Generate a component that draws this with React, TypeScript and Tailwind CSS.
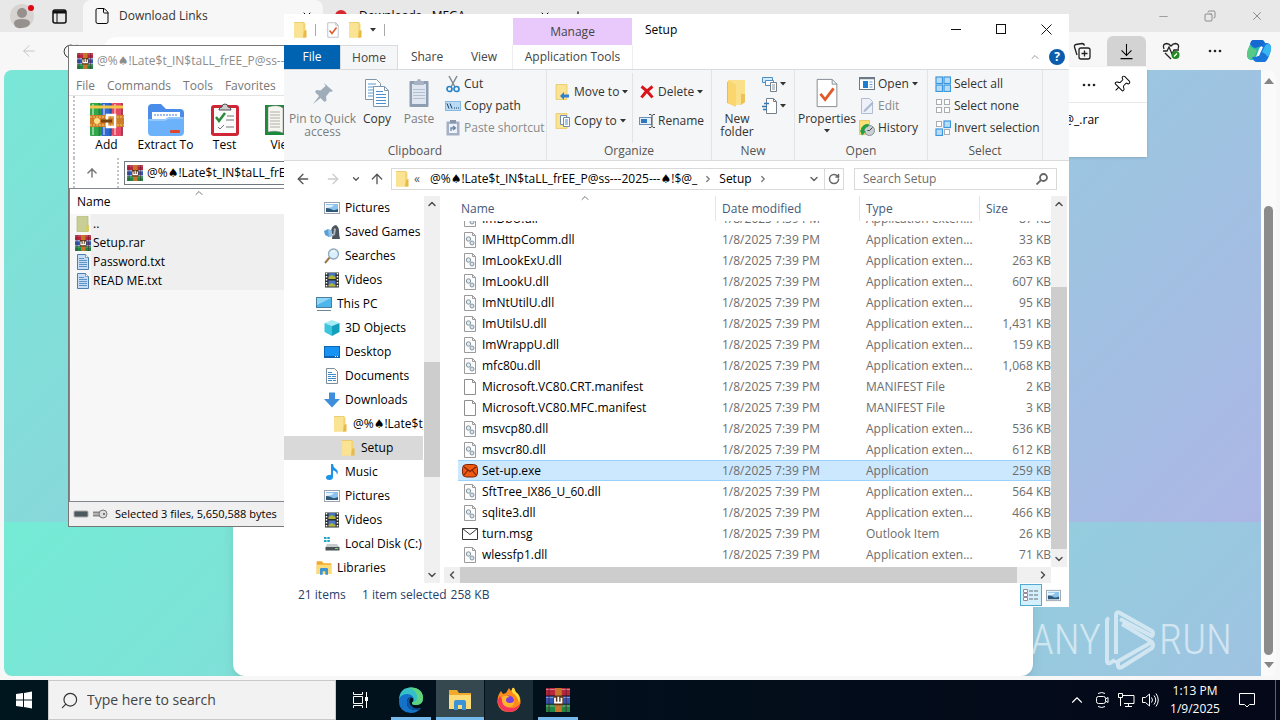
import { useLayoutEffect, useRef } from "react";
import type { ReactNode } from "react";
import clsx from "clsx";
import {
  ArrowDownToLine,
  ArrowLeft,
  ArrowRight,
  ArrowUp,
  ChevronDown,
  ChevronLeft,
  ChevronRight,
  ChevronUp,
  Copy,
  File,
  Lock,
  Minus,
  Pin,
  Plus,
  RotateCw,
  Search,
  X,
} from "lucide-react";

const ARCHIVE = "@%♠!Late$t_IN$taLL_frEE_P@ss---2025---♠!$@_";

type IconProps = { size?: number };

/* ---------- Icons ---------- */

const FolderIcon = ({ size = 16 }: IconProps) => (
  <svg width={size} height={size} viewBox="0 0 16 16">
    <path d="M2 0.5h10l1.5 1.2V15.5H2z" fill="#f9dc7d" />
    <path d="M2 0.5h10v15H2z" fill="#fbe394" />
    <path d="M12 9l2.5-1v7.5H11z" fill="#e8b93c" />
    <path d="M2 0.5h10v15" fill="none" stroke="#e6c35c" strokeWidth="0.7" />
  </svg>
);

const ParentFolderIcon = () => (
  <svg width="16" height="16" viewBox="0 0 16 16">
    <path d="M2 0.5h11v15H2z" fill="#c9cf94" stroke="#b3b876" strokeWidth="0.7" />
    <path d="M11 10l3-1v6.500h-3z" fill="#d6cd62" />
  </svg>
);

const BooksIcon = ({ size = 16 }: IconProps) => (
  <svg width={size} height={size} viewBox="0 0 16 16">
    <rect width="16" height="5" fill="#b8263b" />
    <rect y="5.5" width="16" height="5" fill="#2f58b4" />
    <rect y="11" width="16" height="5" fill="#1f8742" />
    <path d="M0 1h16M0 6.3h16M0 12h16" stroke="#fff" strokeOpacity="0.4" strokeWidth="0.7" />
    <path d="M2 0v16M13.5 0v16" stroke="#521730" strokeOpacity="0.5" />
    <rect x="6" width="4.5" height="16" fill="#c8752c" />
    <rect x="5" y="5" width="6.5" height="6.5" fill="#5b3318" />
    <path d="M6 6.5v3.2h4.3V6.5M8.2 5.8v3.6" fill="none" stroke="#fff" strokeWidth="1.2" />
  </svg>
);

const AddIcon = () => (
  <svg width="34" height="34" viewBox="0 0 34 34">
    <rect x="0" y="0" width="11" height="33" rx="1" fill="#31a848" />
    <rect x="11" y="0" width="11" height="33" rx="1" fill="#3268cf" />
    <rect x="22" y="0" width="11" height="33" rx="1" fill="#e54863" />
    <path d="M3 1v31M14 1v31M25 1v31" stroke="#fff" strokeOpacity="0.45" strokeWidth="2" />
    <path d="M9.500 0v33M20.500 0v33M32 0v33" stroke="#17233f" strokeOpacity="0.3" strokeWidth="2" />
    <path d="M0 4h11M11 4h11M22 4h11" stroke="#f1c64a" strokeWidth="3" />
    <rect x="-1" y="12" width="36" height="12" fill="#cf7d26" />
    <path d="M0 14h34M0 22h34" stroke="#f5cd75" strokeWidth="1" strokeDasharray="2 1" />
    <rect x="17" y="12" width="8" height="12" fill="none" stroke="#fff" strokeWidth="2.500" />
    <path d="M11 18h11" stroke="#7b4310" strokeWidth="3" />
    <circle cx="7" cy="18" r="3" fill="#ffe08a" />
  </svg>
);

const ExtractIcon = () => (
  <svg width="38" height="34" viewBox="0 0 38 34">
    <path d="M1 5q0-4 4-4h9l5 5h14q4 0 4 4v8H1z" fill="#4a8cea" />
    <path d="M5 9h28v10H5z" fill="#fff" />
    <path d="M7 12h24" stroke="#9fbde6" strokeWidth="2" strokeDasharray="2 1" />
    <path d="M1 16h17l4-2h15v15q0 4-4 4H5q-4 0-4-4z" fill="#6cb2fa" />
    <path d="M2 17h16l4-2h14" stroke="#b6dcff" fill="none" />
    <rect x="23" y="27" width="10" height="3" rx="1" fill="#e0452d" />
  </svg>
);

const TestIcon = () => (
  <svg width="30" height="34" viewBox="0 0 30 34">
    <rect x="1" y="2" width="28" height="31" rx="3" fill="#cf2536" />
    <rect x="4" y="5" width="22" height="25" fill="#fbfbfb" />
    <path d="M9 7q0-3 3-3 0-3 3-3t3 3q3 0 3 3z" fill="#ccc" stroke="#555" />
    <path d="M6 14l3 4 6-8" fill="none" stroke="#2a8a3c" strokeWidth="2.500" />
    <path d="M17 13h7M16 17h8M8 24l2 2 4-4M16 24h8" fill="none" stroke="#777" />
  </svg>
);

const ViewIcon = () => (
  <svg width="38" height="34" viewBox="0 0 38 34">
    <path d="M0 2h36v30H0z" fill="#1d8a3b" />
    <path d="M3 4q10-3 15 1v25q-6-3-15-1zM34 4q-10-3-15 1v25q6-3 15-1z" fill="#f6f6f1" stroke="#777" strokeWidth="0.500" />
    <path d="M5 9h10M5 12h10M5 15h10M5 18h10M5 21h10M5 24h10" stroke="#b0b0a8" />
  </svg>
);

const TextFileIcon = () => (
  <svg width="14" height="16" viewBox="0 0 14 16">
    <path d="M1.500 0.500h8l3 3v12h-11z" fill="#c5def5" stroke="#4c7fae" />
    <path d="M9.500 0.500v3h3" fill="#fff" stroke="#4c7fae" strokeWidth="0.700" />
    <path d="M3 4.500h5M3 6.500h8M3 8.500h8M3 10.500h8M3 12.500h8" stroke="#5f92c4" />
  </svg>
);

const DllIcon = () => (
  <svg width="14" height="16" viewBox="0 0 14 16">
    <path d="M1.500 0.500h8l3 3v12h-11z" fill="#fcfcfc" stroke="#9b9b9b" />
    <path d="M9.500 0.500v3h3" fill="none" stroke="#9b9b9b" />
    <circle cx="5.500" cy="7" r="2.200" fill="#e5eaed" stroke="#8195a2" />
    <circle cx="9" cy="11" r="2" fill="#dbe4ea" stroke="#8195a2" />
  </svg>
);

const BlankIcon = () => (
  <svg width="14" height="16" viewBox="0 0 14 16">
    <path d="M1.500 0.500h8l3 3v12h-11z" fill="#fff" stroke="#8e8e8e" />
    <path d="M9.500 0.500v3h3" fill="none" stroke="#8e8e8e" />
  </svg>
);

const MailExeIcon = () => (
  <svg width="16" height="14" viewBox="0 0 16 14">
    <rect x="0.500" y="0.500" width="15" height="12.500" rx="4" fill="#ee5a14" stroke="#7d2305" />
    <path d="M2 3l6 4.500L14 3M2 11l4-5M14 11l-4-5" fill="none" stroke="#7d2305" strokeWidth="1.200" />
  </svg>
);

const MsgIcon = () => (
  <svg width="16" height="12" viewBox="0 0 16 12">
    <path d="M0.500 0.500h15v11H0.500zl7.500 6 7.500-6" fill="#fff" stroke="#3a3a3a" />
  </svg>
);

const PictureIcon = ({ size = 16 }: IconProps) => (
  <svg width={size} height={size} viewBox="0 0 16 16">
    <rect x="0.500" y="2.500" width="15" height="11" fill="#fff" stroke="#9aa3ad" />
    <rect x="2" y="4" width="12" height="8" fill="#8cc3ec" />
    <path d="M2 5h8q-2 3-8 3z" fill="#e2f1fb" />
    <path d="M2 8q4 0 6 1.500T14 9v3H2z" fill="#2f5878" />
  </svg>
);

const GamesIcon = () => (
  <svg width="16" height="16" viewBox="0 0 16 16">
    <path d="M8 15q0-3 1-5-2 0-2-2 0-6 5-7 3 2 3 6 0 4 1 8z" fill="#4c555e" />
    <path d="M0 7l4-2 4 2v5l-3 1-4-2z" fill="#5a9fd4" />
    <path d="M4 5l4 2v5l-3 1z" fill="#8fc3e8" />
    <path d="M10 4l2 1-1 6-2 1z" fill="#a9b6c1" />
  </svg>
);

const MagnifierIcon = () => (
  <svg width="16" height="16" viewBox="0 0 16 16">
    <path d="M1 15l5-6" stroke="#a0784e" strokeWidth="2" />
    <circle cx="9.500" cy="6" r="5" fill="#d8effc" stroke="#8fa9bc" strokeWidth="1.300" />
    <path d="M7 5q1-2.500 4-2" stroke="#fff" fill="none" />
  </svg>
);

const FilmIcon = () => (
  <svg width="16" height="16" viewBox="0 0 16 16">
    <rect x="1" y="0.500" width="14" height="15" fill="#2e2e2e" />
    <path d="M2.500 1v15M13.500 1v15" stroke="#fff" strokeWidth="1.500" strokeDasharray="1.500 1.500" />
    <path d="M4.500 1h7v6h-7z" fill="#4676b9" />
    <path d="M4.500 8.500h7v6h-7z" fill="#4f78c2" />
    <path d="M4.500 5l3-2 4 2v2h-7zM4.500 13l3-2 4 2v1.500h-7z" fill="#b2b438" />
  </svg>
);

const PcIcon = () => (
  <svg width="16" height="16" viewBox="0 0 16 16">
    <rect x="0.500" y="1.500" width="15" height="10" fill="#4fb6ec" stroke="#4a7f9f" />
    <path d="M1 2h14L1 9z" fill="#8fd6f7" />
    <path d="M1 14.500h14" stroke="#6f8796" />
  </svg>
);

const CubeIcon = () => (
  <svg width="16" height="16" viewBox="0 0 16 16">
    <path d="M8 0l7.500 3L8 6 0.500 3z" fill="#a5ecf6" />
    <path d="M0.500 3L8 6v10l-7.500-4z" fill="#3cc6de" />
    <path d="M15.500 3L8 6v10l7.500-4z" fill="#13a0be" />
  </svg>
);

const DesktopIcon = () => (
  <svg width="16" height="16" viewBox="0 0 16 16">
    <rect x="0.500" y="2.500" width="15" height="11" fill="#1793f4" stroke="#0b66b5" />
    <path d="M1 12.500h14" stroke="#0e5fa8" />
    <path d="M11 12.500h3" stroke="#fff" strokeDasharray="1 1" />
  </svg>
);

const DocumentIcon = () => (
  <svg width="16" height="16" viewBox="0 0 16 16">
    <path d="M2.500 0.500h8l3 3v12h-11z" fill="#fff" stroke="#7e8c98" />
    <path d="M4 4.500h4M4 6.500h8M4 8.500h3M8 8.500h4M4 10.500h8M4 12.500h4M9 12.500h3" stroke="#3e8cc7" />
  </svg>
);

const DownIcon = () => (
  <svg width="16" height="16" viewBox="0 0 16 16">
    <path d="M5 0.500h6V7h5l-8 8.500L0 7h5z" fill="#3d8fdb" />
  </svg>
);

const MusicIcon = () => (
  <svg width="16" height="16" viewBox="0 0 16 16">
    <path d="M7 0h2q0 3 3 5t1 6q0-4-4-4.500V13q0 3-3.500 3T2 13.500 5 11l2-.2z" fill="#1d94e8" />
  </svg>
);

const DiskIcon = () => (
  <svg width="16" height="16" viewBox="0 0 16 16">
    <path d="M0 1h2.500v2H0zM3.300 1h2.500v2H3.300zM0 4h2.500v2H0zM3.300 4h2.500v2H3.300z" fill="#1fa5c8" />
    <path d="M3 8h10l2.500 3h-14z" fill="#c7cccf" />
    <rect x="1.500" y="11" width="14" height="3.500" fill="#4b5257" />
    <rect x="11" y="12" width="3" height="1" fill="#6fe06f" />
  </svg>
);

const LibraryIcon = ({ size = 16 }: IconProps) => (
  <svg width={size} height={size} viewBox="0 0 24 24">
    <path d="M1 2h8l2 3h12v16H1z" fill="#f0a92b" />
    <path d="M1 7h22v14H1z" fill="#fbdc79" />
    <path d="M6 22v-8q0-2 2-2h8q2 0 2 2v8h-4v-5h-4v5z" fill="#3c93d6" />
  </svg>
);

const CheckPage = ({ size = 16 }: IconProps) => (
  <svg width={size} height={size} viewBox="0 0 24 32">
    <path d="M1.500 1.500h16l5 5v24h-21z" fill="#fff" stroke="#808890" />
    <path d="M17.500 1.500v5h5" fill="none" stroke="#808890" />
    <path d="M5 17l5 6 9-12" fill="none" stroke="#e1582a" strokeWidth="3" />
  </svg>
);

const PinQuickIcon = () => (
  <svg width="24" height="24" viewBox="0 0 24 24">
    <path d="M13 2l9 8-2 1-1-.5-4 5 .5 4-2 1.500-4-4L2 23l6-8-4-4 1.500-2 4 .5 5-4.500z" fill="#9fadbb" />
  </svg>
);

const CopyIcon = () => (
  <svg width="26" height="30" viewBox="0 0 26 30">
    <path d="M1.500 1.500h11l4 4v16h-15z" fill="#fff" stroke="#8096aa" />
    <path d="M4 6h8M4 9h10M4 12h10M4 15h10M4 18h10" stroke="#5b9bd5" />
    <path d="M9.500 8.500h11l4 4v16h-15z" fill="#fff" stroke="#8096aa" />
    <path d="M20.500 8.500v4h4" fill="none" stroke="#8096aa" />
    <path d="M12 13.500h7M12 16.500h10M12 19.500h10M12 22.500h10M12 25.500h10" stroke="#4b8fd0" />
  </svg>
);

const PasteIcon = () => (
  <svg width="22" height="30" viewBox="0 0 22 30">
    <rect x="1.500" y="3" width="19" height="26" rx="1" fill="#8e9db1" />
    <rect x="4" y="6" width="14" height="20" fill="#dfe6f0" />
    <path d="M6 3h3q0-2 2-2t2 2h3v4H6z" fill="#a7b3c3" />
    <path d="M5 11.500h12M5 14.500h12M5 17.500h12M5 20.500h12" stroke="#b3c0d2" />
  </svg>
);

const CutIcon = () => (
  <svg width="14" height="18" viewBox="0 0 14 18">
    <path d="M3 1l6 11M11 1L5 12" stroke="#7e8a94" strokeWidth="1.500" />
    <circle cx="3.500" cy="14" r="2.500" fill="none" stroke="#2a86c8" strokeWidth="1.700" />
    <circle cx="10.500" cy="14" r="2.500" fill="none" stroke="#2a86c8" strokeWidth="1.700" />
  </svg>
);

const CopyPathIcon = () => (
  <svg width="16" height="12" viewBox="0 0 16 12">
    <rect x="0.500" y="1.500" width="15" height="9" fill="#b9dbf5" stroke="#8ab9de" />
    <path d="M2 3.500l2 5M5 3.500l2 5M9 8h1M11 8h1M13 8h1" stroke="#173f66" />
  </svg>
);

const ShortcutIcon = () => (
  <svg width="14" height="16" viewBox="0 0 14 16">
    <rect x="0.500" y="1.500" width="13" height="14" fill="#a3b0c6" />
    <rect x="3" y="4" width="8" height="9" fill="#eef2f8" />
    <rect x="4" width="6" height="3" fill="#8797ad" />
    <path d="M5 11V8h4M7 6l2.500 2L7 10" fill="none" stroke="#6b83a8" strokeWidth="1.300" />
  </svg>
);

const MoveIcon = () => (
  <svg width="16" height="16" viewBox="0 0 16 16">
    <path d="M1 0.500h11v15H1z" fill="#fbe394" stroke="#e6c35c" strokeWidth="0.700" />
    <path d="M5 12l4-4v2.500h5v3H9V16z" fill="#3181cf" />
  </svg>
);

const CopyToIcon = () => (
  <svg width="16" height="16" viewBox="0 0 16 16">
    <path d="M1 0.500h11v15H1z" fill="#fbe394" stroke="#e6c35c" strokeWidth="0.700" />
    <path d="M5.500 2.500h6v9h-6z" fill="#fff" stroke="#6f8cb0" />
    <path d="M8.500 4.500h6v9h-6z" fill="#fff" stroke="#6f8cb0" />
    <path d="M10 7h3M10 9h3M10 11h3" stroke="#4b8fd0" />
  </svg>
);

const DeleteIcon = () => (
  <svg width="14" height="14" viewBox="0 0 14 14">
    <path d="M1.500 1.500q6 4 11 11M12.500 1.500q-7 5-11 11" fill="none" stroke="#d8151c" strokeWidth="3" />
  </svg>
);

const RenameIcon = () => (
  <svg width="16" height="16" viewBox="0 0 16 16">
    <rect x="0.500" y="4.500" width="12" height="7" fill="#e3eefa" stroke="#6f90b5" />
    <rect x="2" y="6" width="6" height="4" fill="#2f78bd" />
    <path d="M10 1.500h2l1 1 1-1h2M13 2v12M10 14.500h2l1-1 1 1h2" fill="none" stroke="#4a4f55" />
  </svg>
);

const NewFolderIcon = () => (
  <svg width="22" height="28" viewBox="0 0 22 28">
    <path d="M1 3l8-2v26l-8-3z" fill="#e9bd4e" />
    <path d="M2 1h17v22l-4 3H9V6z" fill="#fbe08a" />
    <path d="M15 15h4v8l-4 3z" fill="#eec25a" />
    <path d="M2 1l8 5v22l-8-4z" fill="#fbd56d" />
  </svg>
);

const NewItemIcon = () => (
  <svg width="16" height="16" viewBox="0 0 16 16">
    <path d="M0.500 1.500h10v5h-10z" fill="#d7eafa" stroke="#4a8ec6" />
    <path d="M3.500 4.500h8v5h-8z" fill="#fff" stroke="#4a8ec6" />
    <path d="M8.500 6.500h6v9h-6z" fill="#fff" stroke="#75808a" />
    <path d="M10 9h3M10 11h3M10 13h3" stroke="#8a949d" />
  </svg>
);

const EasyAccessIcon = () => (
  <svg width="16" height="16" viewBox="0 0 16 16">
    <path d="M4.500 0.500h7l3 3v12h-10z" fill="#fff" stroke="#75808a" />
    <path d="M11.500 0.500v3h3" fill="none" stroke="#75808a" />
    <path d="M0 8.500h5M2 5.500h5M1 11.500h4" stroke="#2f78bd" strokeWidth="1.300" />
  </svg>
);

const OpenIcon = () => (
  <svg width="16" height="14" viewBox="0 0 16 14">
    <rect x="0.500" y="0.500" width="15" height="12" fill="#fff" stroke="#6d7a86" />
    <path d="M1 1.500h14" stroke="#6d7a86" strokeWidth="1.500" />
    <rect x="4" y="4" width="5" height="7" fill="#1f7fcf" />
    <path d="M10.500 5h3M10.500 7.500h3M10.500 10h3" stroke="#6d9dc8" />
  </svg>
);

const EditIcon = () => (
  <svg width="14" height="16" viewBox="0 0 14 16">
    <path d="M1.500 0.500h8l3 3v12h-11z" fill="#eef1f8" stroke="#b0bcd2" />
    <path d="M4 12l8-8 1.500 1.500-8 8-2 .5z" fill="#a9b8d3" />
  </svg>
);

const HistoryIcon = () => (
  <svg width="16" height="16" viewBox="0 0 16 16">
    <path d="M0.500 0.500h10v14h-10z" fill="#fbe178" stroke="#dfba45" strokeWidth="0.700" />
    <circle cx="10.500" cy="10.500" r="5" fill="#c9d0d4" stroke="#87919a" />
    <path d="M10.500 10.500l3-3M10.500 10.500h-2" stroke="#444" />
    <path d="M2 10a7 6 0 0 1 8-6l-1 3q-3 0-4 4l2 .5-4 4-2-5z" fill="#22a046" />
  </svg>
);

const Tiles = ({ on }: { on: boolean[] }) => (
  <svg width="16" height="16" viewBox="0 0 16 16">
    {on.map((lit, i) => {
      const x = i % 2 ? 8 : 0;
      const y = i > 1 ? 8 : 0;
      return lit ? (
        <rect key={i} x={x + 1} y={y + 1} width="6.500" height="6.500" fill="#b5ddfa" stroke="#3c97dc" strokeWidth="1.200" />
      ) : (
        <rect key={i} x={x + 1.5} y={y + 1.5} width="5" height="5" fill="#fff" stroke="#a7adb2" />
      );
    })}
  </svg>
);

const EdgeIcon = () => (
  <svg width="26" height="26" viewBox="0 0 26 26">
    <path d="M1 14Q1 6 8 6q8 0 8 6.500-1-2-3-2-4 0-4 5 0 7 8 7.500 4 0 6-2-4 5-10 5Q1 25 1 14z" fill="#1473c8" />
    <path d="M1 12Q2 .5 13 .5 24.500 1 25 11q0 7-7 7-4.500 0-4-2.500 2-1.500 1.500-4Q15 7.500 9.500 7 3.500 7 1 12z" fill="#35bfc9" />
    <path d="M13 .5Q24.500 1 25 11q0 7-7 7-4.500 0-4-2.500 6 0 5-7T9 1.200Q11 .5 13 .5z" fill="#5fd47a" />
    <path d="M9 15.500q0-4 4-5-3 4 0 8t9 2.500l1 0q-2 2-6 2-8-.5-8-7.500z" fill="#0e55a5" />
  </svg>
);

const FirefoxIcon = () => (
  <svg width="26" height="26" viewBox="0 0 26 26">
    <path d="M3 7l2-3 2 3 3-1 3-5 2 3q2-4 3-3 1 4 4 6 3 4 2.500 9-2 9-11.500 9T1.500 16Q1 11 3 7z" fill="#ff8a1c" />
    <path d="M1.500 14Q3 24 13 25q9 0 11.500-9-3 5-9 5-8 0-9-8L4 9z" fill="#f4365c" />
    <circle cx="12.500" cy="14" r="5.500" fill="#7a3ee0" />
    <path d="M6 10q4-3 8 0-4 0-4 3t4 3 4-3q1 7-6 7-7-1-6-10z" fill="#ffb52b" />
    <path d="M16 2q1-2 2-1 1 4 4 6 3 4 1 9-1-6-5-9-3-2-2-5z" fill="#ffde3c" />
  </svg>
);

const CopilotIcon = () => (
  <svg width="26" height="24" viewBox="0 0 26 24">
    <path d="M7 1h9q2 0 3 3l1 3h-4q-2 0-3 3l-3 8q-1 3-4 3-5 0-5-5 0-3 2-8t4-7z" fill="#28b9b0" />
    <path d="M7 1h9q2 0 3 3l1 3h-4L9 9Q6 8 4 5q1-4 3-4z" fill="#1769d2" />
    <path d="M1 15q0-4 3-9 2 4 7 5l-3 7q-1 2-4 2-3 0-3-5z" fill="#59c986" />
    <path d="M19 23h-9q-2 0-3-3l-1-2h4q2 0 3-3l3-8q1-3 4-3 5 0 5 5 0 3-2 8t-4 6z" fill="#1b76dc" />
    <path d="M25 9q0 4-3 9-3-4-6-5l3-6q1-2 3-2 3 0 3 4z" fill="#37b8f2" />
    <path d="M15 8l2 0-4 9h-2z" fill="#fff" />
  </svg>
);

const Caret = () => (
  <svg width="6" height="4" viewBox="0 0 6 4" className="shrink-0">
    <path d="M0 0h6L3 3.500z" fill="#333" />
  </svg>
);

const Dots = () => (
  <svg width="14" height="4" viewBox="0 0 14 4">
    <circle cx="2" cy="2" r="1.300" fill="#222" />
    <circle cx="7" cy="2" r="1.300" fill="#222" />
    <circle cx="12" cy="2" r="1.300" fill="#222" />
  </svg>
);

/* ---------- Browser ---------- */

const Browser = () => (
  <section className="flex flex-1 flex-col bg-[#f7f7f7]">
    <div className="flex h-8 shrink-0 bg-[#e8e8e8]">
      <div className="flex w-[83px] items-center gap-4 pl-2">
        <button aria-label="Profile" className="w-7">
          <svg width="28" height="28" viewBox="0 0 28 28">
            <circle cx="14" cy="14" r="12" fill="#d6d3d0" />
            <circle cx="14" cy="11" r="5" fill="#96918d" />
            <path d="M6 21q0-4 8-4t8 4-8 5-8-5z" fill="#96918d" />
            <circle cx="23" cy="6" r="3" fill="#dc0a15" />
          </svg>
        </button>
        <button aria-label="Tab actions">
          <svg width="15" height="15" viewBox="0 0 15 15">
            <rect x="1" y="1" width="13" height="13" rx="2" fill="none" stroke="#111" strokeWidth="1.500" />
            <path d="M1 3h13" stroke="#111" strokeWidth="3" />
            <path d="M5 3v11" stroke="#111" />
          </svg>
        </button>
      </div>
      <div className="flex w-60 items-center gap-2 rounded-t-lg bg-[#f7f7f7] px-[10px]">
        <File size={18} strokeWidth={1.3} />
        <span className="flex-1 text-[#333]">Download Links</span>
        <X size={12} />
      </div>
      <div className="flex w-60 items-center gap-3 px-3">
        <span className="size-3 rounded-full bg-[#d9272e]" />
        <span className="flex-1">Downloads - MEGA</span>
        <X size={12} />
      </div>
      <button aria-label="New tab" className="px-2">
        <Plus size={14} />
      </button>
      <div className="ml-auto flex items-center gap-[34px] pr-4 text-[#777]">
        <Minus size={13} strokeWidth={1.2} />
        <Copy size={12} strokeWidth={1.6} className="-scale-x-100" />
        <X size={14} strokeWidth={1.4} />
      </div>
    </div>

    <div className="relative flex h-[38px] shrink-0 items-center pl-5">
      <ArrowLeft size={18} strokeWidth={1} className="text-[#b5b5b5]" />
      <RotateCw size={17} strokeWidth={1.4} className="ml-6 text-[#333]" />
      <div className="ml-6 flex h-7 flex-1 items-center rounded-full bg-white pl-4">
        <Lock size={13} strokeWidth={1.5} />
      </div>
      <div className="flex items-center gap-3 pr-2 pl-10">
        <button aria-label="Collections" className="mr-1">
          <svg width="18" height="18" viewBox="0 0 18 18" fill="none" stroke="#222" strokeWidth="1.300">
            <rect x="6" y="6" width="11" height="11" rx="2" />
            <path d="M11.500 8.500v6M8.500 11.500h6M4 13l-2.500-8Q1 3 3 2.500L9 1.500q2 0 2.500 2" />
          </svg>
        </button>
        <button aria-label="Downloads" className="flex h-[30px] w-[39px] items-center justify-center rounded-t-md bg-[#d3d3d3]">
          <ArrowDownToLine size={19} strokeWidth={1.3} />
        </button>
        <button aria-label="Browser essentials" className="mr-2 ml-1">
          <svg width="18" height="18" viewBox="0 0 18 18" fill="none" stroke="#222" strokeWidth="1.300">
            <path d="M2 7Q0 2 4.500 1.500 7 1.500 9 4q2-2.500 4.500-2.500Q18 2 16 7M3 11l6 6M1 9h4l2-4 3 7 2-4h5" />
            <circle cx="13.500" cy="13" r="4" fill="#218a21" stroke="none" />
            <path d="M12 14.500l3-3" stroke="#fff" />
          </svg>
        </button>
        <button aria-label="Settings" className="mr-3 ml-2">
          <Dots />
        </button>
        <button aria-label="Copilot">
          <CopilotIcon />
        </button>
      </div>
      <div className="absolute top-[35px] right-[133px] w-[340px] bg-white pb-[29px] shadow-sm">
        <div className="flex h-9 items-center justify-end gap-4 border-b border-[#e8e8e8] pr-4">
          <Dots />
          <Pin size={19} strokeWidth={1.2} className="rotate-45" />
        </div>
        <p className="h-[25px] pt-[9px] pr-12 text-right">@_.rar</p>
      </div>
    </div>

    <div className="flex flex-1 pr-1 pb-1 pl-1">
      <div className="flex flex-1 justify-center overflow-hidden rounded-l-lg bg-[linear-gradient(135deg,#74ebd5,#acb6e5)] bg-[length:100%_606px] bg-[position:0_452px]">
        <main className="w-[800px] rounded-b-xl bg-white shadow-lg" />
      </div>
      <div className="flex w-[15px] flex-col items-center rounded-r-lg bg-[#fafafa] py-2">
        <svg width="10" height="7" viewBox="0 0 10 7">
          <path d="M5 0l5 6H0z" fill="#858585" />
        </svg>
        <div className="mt-auto h-[449px] w-[9px] rounded-full bg-[#8b8b8b]" />
        <svg width="10" height="7" viewBox="0 0 10 7" className="mt-[6px]">
          <path d="M5 7l5-6H0z" fill="#858585" />
        </svg>
      </div>
    </div>
  </section>
);

/* ---------- WinRAR ---------- */

const rarFiles = [
  { name: "..", icon: <ParentFolderIcon /> },
  { name: "Setup.rar", icon: <BooksIcon /> },
  { name: "Password.txt", icon: <TextFileIcon /> },
  { name: "READ ME.txt", icon: <TextFileIcon /> },
];

const RarTool = ({ icon, label }: { icon: ReactNode; label: string }) => (
  <button className="flex w-[59px] shrink-0 flex-col items-center whitespace-nowrap">
    {icon}
    <span>{label}</span>
  </button>
);

const RarWindow = () => (
  <section className="absolute top-[45px] left-[68px] flex h-[482px] w-[216px] flex-col overflow-hidden border border-r-0 border-[#777] bg-white">
    <header className="flex h-[30px] items-center gap-1 pl-2 text-[#8c8c8c]">
      <span className="shrink-0">
        <BooksIcon />
      </span>
      <h1 className="whitespace-nowrap">@%♠!Late$t_IN$taLL_frEE_P@ss---</h1>
    </header>
    <nav className="flex h-5 items-center gap-3 border-b border-[#e5e5e5] pl-[7px] text-[#777]">
      <button>File</button>
      <button>Commands</button>
      <button>Tools</button>
      <button>Favorites</button>
    </nav>
    <div className="ml-1 flex h-[62px] items-start border-l-2 border-dotted border-[#c4c4c4] pt-[7px] pl-0.5">
      <RarTool icon={<AddIcon />} label="Add" />
      <RarTool icon={<ExtractIcon />} label="Extract To" />
      <RarTool icon={<TestIcon />} label="Test" />
      <RarTool icon={<ViewIcon />} label="View" />
    </div>
    <div className="ml-1 flex h-[30px] items-center border-l-2 border-dotted border-[#c4c4c4]">
      <button
        aria-label="Up one level"
        className="flex h-full w-11 shrink-0 items-center justify-center border-r-2 border-dotted border-[#c4c4c4] pr-2 text-[#777]"
      >
        <ArrowUp size={14} strokeWidth={2.5} />
      </button>
      <div className="ml-[5px] flex h-6 flex-1 items-center gap-1 border border-r-0 border-[#6f7a85] pl-0.5">
        <span className="shrink-0">
          <BooksIcon />
        </span>
        <span className="whitespace-nowrap">@%♠!Late$t_IN$taLL_frEE_</span>
      </div>
    </div>
    <div className="flex-1 border-y border-l border-[#828790] bg-[#f7f7f7]">
      <div className="relative flex h-[25px] items-center bg-white pl-[7px]">
        Name
        <ChevronUp size={12} className="absolute -top-0.5 left-[123px] text-[#777]" />
      </div>
      <ul>
        {rarFiles.map((f) => (
          <li key={f.name} className="flex h-[19px] items-center pl-1">
            <span className="flex w-[17px] items-center justify-center">{f.icon}</span>
            <span className="flex-1 bg-[#efefef] pl-0.5 leading-[19px]">{f.name}</span>
          </li>
        ))}
      </ul>
    </div>
    <footer className="flex h-6 items-center bg-[#f0f0f0] pl-1">
      <svg width="36" height="14" viewBox="0 0 36 14" className="shrink-0">
        <rect x="1" y="4" width="14" height="6" rx="1" fill="#4c5a60" stroke="#aaa" />
        <path d="M20 6h9M20 8h9" stroke="#888" strokeWidth="3" />
        <path d="M20 7h9" stroke="#ddd" />
        <circle cx="30" cy="7" r="4" fill="#ddd" stroke="#777" />
        <circle cx="31" cy="7" r="1" fill="#555" />
      </svg>
      <span className="ml-[6px] text-[11px] whitespace-nowrap">Selected 3 files, 5,650,588 bytes</span>
    </footer>
  </section>
);

/* ---------- Explorer ---------- */

const RibbonGroup = ({
  label,
  className,
  children,
}: {
  label: string;
  className: string;
  children: ReactNode;
}) => (
  <div className={clsx("flex shrink-0 flex-col border-r border-[#e2e3e4] pt-[3px]", className)}>
    <div className="flex h-[70px]">{children}</div>
    <span className="text-center text-[#555]">{label}</span>
  </div>
);

const SmallButton = ({
  icon,
  label,
  caret,
  disabled,
}: {
  icon: ReactNode;
  label: string;
  caret?: boolean;
  disabled?: boolean;
}) => (
  <button disabled={disabled} className="flex h-[22px] items-center gap-[3px] whitespace-nowrap disabled:text-[#8a8a8a]">
    <span className="flex w-4 justify-center">{icon}</span>
    {label}
    {caret && <Caret />}
  </button>
);

const BigButton = ({
  icon,
  lines,
  className,
  disabled,
  caret,
}: {
  icon: ReactNode;
  lines: string[];
  className: string;
  disabled?: boolean;
  caret?: boolean;
}) => (
  <button
    disabled={disabled}
    className={clsx("flex shrink-0 flex-col items-center text-center leading-[13px] whitespace-nowrap disabled:text-[#7d7d7d]", className)}
  >
    <span className="flex h-[39px] items-center">{icon}</span>
    {lines.map((l) => (
      <span key={l}>{l}</span>
    ))}
    {caret && (
      <span className="pt-1">
        <Caret />
      </span>
    )}
  </button>
);

const Ribbon = () => (
  <div className="flex h-[92px] border-y border-[#dadbdc] bg-[#f5f6f7] text-[#333]">
    <RibbonGroup label="Clipboard" className="w-[263px]">
      <BigButton icon={<PinQuickIcon />} lines={["Pin to Quick", "access"]} className="w-[77px]" disabled />
      <BigButton icon={<CopyIcon />} lines={["Copy"]} className="w-8" />
      <BigButton icon={<PasteIcon />} lines={["Paste"]} className="w-[52px]" disabled />
      <div className="flex flex-col">
        <SmallButton icon={<CutIcon />} label="Cut" />
        <SmallButton icon={<CopyPathIcon />} label="Copy path" />
        <SmallButton icon={<ShortcutIcon />} label="Paste shortcut" disabled />
      </div>
    </RibbonGroup>
    <RibbonGroup label="Organize" className="w-[165px]">
      <div className="flex w-[86px] flex-col gap-[7px] border-r border-[#e2e3e4] pt-2 pl-2">
        <SmallButton icon={<MoveIcon />} label="Move to" caret />
        <SmallButton icon={<CopyToIcon />} label="Copy to" caret />
      </div>
      <div className="flex flex-col gap-[7px] pt-2 pl-[6px]">
        <SmallButton icon={<DeleteIcon />} label="Delete" caret />
        <SmallButton icon={<RenameIcon />} label="Rename" />
      </div>
    </RibbonGroup>
    <RibbonGroup label="New" className="w-[83px]">
      <BigButton icon={<NewFolderIcon />} lines={["New", "folder"]} className="w-[50px]" />
      <div className="flex flex-col">
        <button aria-label="New item" className="flex h-[22px] items-center gap-0.5">
          <NewItemIcon />
          <Caret />
        </button>
        <button aria-label="Easy access" className="flex h-[22px] items-center gap-0.5">
          <EasyAccessIcon />
          <Caret />
        </button>
      </div>
    </RibbonGroup>
    <RibbonGroup label="Open" className="w-[133px]">
      <BigButton icon={<CheckPage size={30} />} lines={["Properties"]} className="w-[64px]" caret />
      <div className="flex flex-col">
        <SmallButton icon={<OpenIcon />} label="Open" caret />
        <SmallButton icon={<EditIcon />} label="Edit" disabled />
        <SmallButton icon={<HistoryIcon />} label="History" />
      </div>
    </RibbonGroup>
    <RibbonGroup label="Select" className="w-[115px]">
      <div className="flex flex-col pl-[7px]">
        <SmallButton icon={<Tiles on={[true, true, true, true]} />} label="Select all" />
        <SmallButton icon={<Tiles on={[false, false, false, false]} />} label="Select none" />
        <SmallButton icon={<Tiles on={[false, true, true, false]} />} label="Invert selection" />
      </div>
    </RibbonGroup>
  </div>
);

const navItems = [
  { label: "Pictures", icon: <PictureIcon />, pad: "pl-10" },
  { label: "Saved Games", icon: <GamesIcon />, pad: "pl-10" },
  { label: "Searches", icon: <MagnifierIcon />, pad: "pl-10" },
  { label: "Videos", icon: <FilmIcon />, pad: "pl-10" },
  { label: "This PC", icon: <PcIcon />, pad: "pl-8" },
  { label: "3D Objects", icon: <CubeIcon />, pad: "pl-10" },
  { label: "Desktop", icon: <DesktopIcon />, pad: "pl-10" },
  { label: "Documents", icon: <DocumentIcon />, pad: "pl-10" },
  { label: "Downloads", icon: <DownIcon />, pad: "pl-10" },
  { label: "@%♠!Late$t_", icon: <FolderIcon />, pad: "pl-12" },
  { label: "Setup", icon: <FolderIcon />, pad: "pl-14", selected: true },
  { label: "Music", icon: <MusicIcon />, pad: "pl-10" },
  { label: "Pictures", icon: <PictureIcon />, pad: "pl-10" },
  { label: "Videos", icon: <FilmIcon />, pad: "pl-10" },
  { label: "Local Disk (C:)", icon: <DiskIcon />, pad: "pl-10" },
  { label: "Libraries", icon: <LibraryIcon />, pad: "pl-8" },
];

const DLL = "Application exten...";

const files = [
  { name: "ImDbU.dll", type: DLL, size: "87 KB" },
  { name: "IMHttpComm.dll", type: DLL, size: "33 KB" },
  { name: "ImLookExU.dll", type: DLL, size: "263 KB" },
  { name: "ImLookU.dll", type: DLL, size: "607 KB" },
  { name: "ImNtUtilU.dll", type: DLL, size: "95 KB" },
  { name: "ImUtilsU.dll", type: DLL, size: "1,431 KB" },
  { name: "ImWrappU.dll", type: DLL, size: "159 KB" },
  { name: "mfc80u.dll", type: DLL, size: "1,068 KB" },
  { name: "Microsoft.VC80.CRT.manifest", type: "MANIFEST File", size: "2 KB" },
  { name: "Microsoft.VC80.MFC.manifest", type: "MANIFEST File", size: "3 KB" },
  { name: "msvcp80.dll", type: DLL, size: "536 KB" },
  { name: "msvcr80.dll", type: DLL, size: "612 KB" },
  { name: "Set-up.exe", type: "Application", size: "259 KB" },
  { name: "SftTree_IX86_U_60.dll", type: DLL, size: "564 KB" },
  { name: "sqlite3.dll", type: DLL, size: "466 KB" },
  { name: "turn.msg", type: "Outlook Item", size: "26 KB" },
  { name: "wlessfp1.dll", type: DLL, size: "71 KB" },
];

const fileIcon = (type: string) => {
  if (type === "Application") return <MailExeIcon />;
  if (type === "Outlook Item") return <MsgIcon />;
  if (type === "MANIFEST File") return <BlankIcon />;
  return <DllIcon />;
};

const FileList = () => {
  const scroller = useRef<HTMLDivElement>(null);

  // open scrolled down to the last file
  useLayoutEffect(() => {
    if (scroller.current) scroller.current.scrollTop = scroller.current.scrollHeight;
  }, []);

  return (
    <div ref={scroller} className="relative ml-[18px] min-w-0 flex-1 overflow-hidden pb-0.5">
      <table className="w-full table-fixed border-separate border-spacing-0 whitespace-nowrap">
        <thead className="sticky top-0 z-10 bg-white text-left text-[#44597a]">
          <tr className="h-[25px]">
            <th className="relative w-[258px] border-r border-[#e5e5e5] pl-[3px] font-normal">
              Name
              <ChevronUp size={12} className="absolute -top-1 left-[121px] text-[#777]" />
            </th>
            <th className="w-36 border-r border-[#e5e5e5] pl-[6px] font-normal">Date modified</th>
            <th className="w-[120px] border-r border-[#e5e5e5] pl-[6px] font-normal">Type</th>
            <th className="pl-[6px] font-normal">Size</th>
          </tr>
        </thead>
        <tbody className="text-[#6d6d6d]">
          {files.map((f) => {
            const cell = clsx("h-[21px] border-y p-0", f.type === "Application" ? "border-[#99d1ff] bg-[#cce8ff]" : "border-transparent");
            return (
              <tr key={f.name}>
                <td className={cell}>
                  <div className="flex h-[19px] items-center gap-1 pl-1 text-black">
                    <span className="flex w-4 justify-center">{fileIcon(f.type)}</span>
                    {f.name}
                  </div>
                </td>
                <td className={clsx(cell, "pl-[6px]")}>1/8/2025 7:39 PM</td>
                <td className={clsx(cell, "pl-[6px]")}>{f.type}</td>
                <td className={clsx(cell, "text-right")}>{f.size}</td>
              </tr>
            );
          })}
        </tbody>
      </table>
    </div>
  );
};

const ScrollColumn = ({ before, thumb }: { before: string; thumb: string }) => (
  <div className="flex w-4 shrink-0 flex-col items-center bg-[#f0f0f0] text-[#505050]">
    <ChevronUp size={12} strokeWidth={3} className="my-0.5 shrink-0" />
    <div className={before} />
    <div className={clsx("w-full bg-[#cdcdcd]", thumb)} />
    <ChevronDown size={12} strokeWidth={3} className="mt-auto mb-0.5 shrink-0" />
  </div>
);

const Explorer = () => (
  <section className="absolute top-[14px] left-[284px] flex h-[593px] w-[785px] flex-col bg-white">
    <header className="flex h-[31px] shrink-0">
      <div className="flex w-[229px] items-center pl-2">
        <FolderIcon />
        <span className="mx-[7px] h-3 w-px bg-[#aaa]" />
        <span className="mr-[6px] ml-0.5">
          <CheckPage />
        </span>
        <FolderIcon />
        <span className="mr-2 ml-[7px]">
          <Caret />
        </span>
        <span className="h-3 w-px bg-[#aaa]" />
      </div>
      <div className="mt-1 flex w-[119px] items-center justify-center bg-[#e9c9fb] text-[#444]">Manage</div>
      <h1 className="pt-2 pl-[13px]">Setup</h1>
      <div className="ml-auto flex items-center gap-8 pr-4">
        <button aria-label="Minimize">
          <svg width="13" height="13" viewBox="0 0 13 13" stroke="#111">
            <path d="M1 6.500h10" />
          </svg>
        </button>
        <button aria-label="Maximize">
          <svg width="13" height="13" viewBox="0 0 13 13" fill="none" stroke="#111">
            <rect x="1.500" y="1.500" width="9" height="9" />
          </svg>
        </button>
        <button aria-label="Close">
          <svg width="13" height="13" viewBox="0 0 13 13" stroke="#111">
            <path d="M1.500 1.500l10 10M11.500 1.500l-10 10" />
          </svg>
        </button>
      </div>
    </header>

    <nav className="flex h-6 shrink-0 items-center text-center text-[#444]">
      <button className="h-full w-14 bg-[#0063b1] text-white">File</button>
      <button className="h-full w-[58px] border-x border-t border-[#dadbdc] bg-[#f5f6f7]">Home</button>
      <button className="w-[58px]">Share</button>
      <button className="w-14">View</button>
      <button className="h-full w-[121px] border-x border-[#eee]">Application Tools</button>
      <ChevronUp size={12} className="ml-auto text-[#999]" />
      <button aria-label="Help" className="mr-1 ml-2 size-4 rounded-full bg-[#0b5cad] text-xs leading-4 font-bold text-white">
        ?
      </button>
    </nav>

    <Ribbon />

    <div className="flex h-[35px] shrink-0 items-center text-[#555]">
      <ArrowLeft size={16} className="ml-[11px]" />
      <ArrowRight size={16} className="ml-[14px] text-[#ccc]" />
      <ChevronDown size={10} strokeWidth={3} className="ml-[10px]" />
      <ArrowUp size={16} className="ml-2" />
      <div className="ml-[6px] flex h-[22px] w-[453px] items-center border border-[#d9d9d9] pl-0.5 text-black">
        <FolderIcon />
        <span className="ml-1 w-4 text-[#555]">«</span>
        <span className="whitespace-nowrap">{ARCHIVE}</span>
        <ChevronRight size={10} strokeWidth={3} className="mx-[6px] shrink-0 text-[#777]" />
        Setup
        <ChevronRight size={10} strokeWidth={3} className="ml-[6px] shrink-0 text-[#777]" />
        <span className="ml-auto flex h-full items-center gap-1 text-[#666]">
          <ChevronDown size={12} strokeWidth={3} />
          <span className="flex h-full items-center border-l border-[#d9d9d9] px-[3px]">
            <RotateCw size={12} strokeWidth={3} />
          </span>
        </span>
      </div>
      <label className="ml-[10px] flex h-[22px] w-[203px] items-center border border-[#d9d9d9] px-2">
        <input aria-label="Search Setup" placeholder="Search Setup" className="min-w-0 flex-1 outline-none placeholder:text-[#6d6d6d]" />
        <svg width="12" height="12" viewBox="0 0 12 12" fill="none" stroke="#666" strokeWidth="1.800">
          <circle cx="7.500" cy="4.500" r="3.500" />
          <path d="M5 7l-4.500 4.500" />
        </svg>
      </label>
    </div>

    <div className="flex min-h-0 flex-1">
      <div className="w-[140px] shrink-0 overflow-hidden">
        <ul>
          {navItems.map((n, i) => (
            <li
              key={i}
              className={clsx("mr-px flex h-6 items-center gap-[5px] overflow-hidden whitespace-nowrap", n.pad, n.selected && "bg-[#d9d9d9]")}
            >
              <span className="shrink-0">{n.icon}</span>
              {n.label}
            </li>
          ))}
        </ul>
      </div>
      <ScrollColumn before="h-[150px] shrink-0" thumb="h-[115px] shrink-0" />
      <div className="flex min-w-0 flex-1 flex-col">
        <div className="flex min-h-0 flex-1 pr-0.5">
          <FileList />
          <ScrollColumn before="h-[75px] shrink-0" thumb="h-[262px] shrink-0" />
        </div>
        <div className="mr-[18px] ml-1 flex h-4 shrink-0 items-center bg-[#f0f0f0] text-[#505050]">
          <ChevronLeft size={12} strokeWidth={3} className="mx-0.5 shrink-0" />
          <div className="mr-5 h-full flex-1 bg-[#cdcdcd]" />
          <ChevronRight size={12} strokeWidth={3} className="mr-0.5 shrink-0" />
        </div>
      </div>
    </div>

    <footer className="flex h-6 shrink-0 items-center pl-[14px] text-[#27406b]">
      <span className="w-16">21 items</span>
      <span className="mr-1 whitespace-nowrap">1 item selected</span>
      <span>258 KB</span>
      <button aria-label="Details view" className="ml-auto flex size-[22px] items-center justify-center border border-[#4fa9d1] bg-[#d3f0fc]">
        <svg width="16" height="14" viewBox="0 0 16 14">
          <path d="M0.500 1.500h4v3h-4zM0.500 5.500h4v3h-4zM0.500 9.500h4v3h-4z" fill="#fff" stroke="#9a8a98" />
          <path d="M6 3h4M11 3h4M6 7h4M11 7h4M6 11h4M11 11h4" stroke="#6b6f78" />
        </svg>
      </button>
      <button aria-label="Large icons" className="mr-2 ml-1">
        <PictureIcon size={15} />
      </button>
    </footer>
  </section>
);

/* ---------- Watermark and taskbar ---------- */

const Watermark = () => (
  <div className="pointer-events-none absolute top-[608px] right-12 flex items-center gap-1 font-['Roboto_Condensed','Liberation_Sans_Narrow',Roboto,sans-serif] text-[42px] leading-[64px] font-light text-white/55">
    ANY
    <svg width="50" height="60" viewBox="0 0 50 60" fill="none" stroke="#fff" strokeOpacity="0.550" strokeWidth="4" strokeLinejoin="round">
      <path d="M4 8q-2 1-2 3v40q0 3 3 2l5-3" />
      <path d="M11 44V5q0-4 4-2l32 18q2 2 0 5L15 9" />
      <path d="M13 53v3q1 3 4 1l30-19q2-3 0-6L10 53M47 32L17 14" />
    </svg>
    RUN
  </div>
);

const TaskButton = ({
  label,
  icon,
  className,
  bar,
}: {
  label: string;
  icon: ReactNode;
  className?: string;
  bar?: string;
}) => (
  <button aria-label={label} className={clsx("relative flex h-full w-12 items-center justify-center", className)}>
    {icon}
    {bar && <span className={clsx("absolute bottom-0 h-[3px] bg-[#76b9ed]", bar)} />}
  </button>
);

const Taskbar = () => (
  <footer className="flex h-10 shrink-0 items-center bg-linear-to-r from-[#00161f] to-[#040818] text-white">
    <button aria-label="Start" className="flex h-full w-12 items-center justify-center">
      <svg width="16" height="18" viewBox="0 0 16 18" fill="#fff">
        <path d="M0 3l7-1v6.500H0zM8 2l8-1.500v8H8zM0 9.500h7V16l-7-1zM8 9.500h8v8L8 16z" />
      </svg>
    </button>
    <label className="flex h-full w-72 items-center gap-2 border border-[#c9c9c9] bg-[#f2f2f2] pl-[11px] text-[#333]">
      <Search size={19} strokeWidth={1.5} className="-scale-x-100" />
      <input aria-label="Search" placeholder="Type here to search" className="min-w-0 flex-1 text-sm outline-none placeholder:text-[#444]" />
    </label>
    <TaskButton
      label="Task view"
      icon={
        <svg width="17" height="18" viewBox="0 0 17 18" fill="none" stroke="#fff">
          <path d="M1.500 1v2.500h9V1M1.500 17v-2.500h9V17M1.500 5.500h9v7h-9zM14.500 1v16" />
          <rect x="13.500" y="6.500" width="2" height="3" fill="#fff" />
        </svg>
      }
    />
    <TaskButton label="Edge" icon={<EdgeIcon />} className="ml-[3px]" bar="inset-x-1" />
    <TaskButton label="File Explorer" icon={<LibraryIcon size={24} />} className="ml-px bg-[#35474f]" bar="inset-x-0" />
    <TaskButton label="Firefox" icon={<FirefoxIcon />} className="ml-px bg-[#1a2d36]" />
    <TaskButton label="WinRAR" icon={<BooksIcon size={24} />} className="ml-px" bar="inset-x-1" />
    <div className="ml-auto flex h-full items-center">
      <ChevronUp size={18} strokeWidth={1.5} />
      <svg width="16" height="18" viewBox="0 0 16 18" fill="none" stroke="#fff" className="ml-2">
        <path d="M4 2.500q4-2 7 0M4 15.500q4 2 7 0M11.500 8l2.500-1.500v5L11.500 10" />
        <rect x="2.500" y="5.500" width="9" height="7" rx="2" />
      </svg>
      <svg width="17" height="16" viewBox="0 0 17 16" fill="none" stroke="#fff" className="ml-2">
        <path d="M5 3.500h11v8H6M10.500 12v2.500M7 14.500h7M0.500 1.500h4v4h-4zM2.500 6v8" />
      </svg>
      <svg width="17" height="16" viewBox="0 0 17 16" fill="none" stroke="#fff" className="ml-[7px]">
        <path d="M0.500 5.500h3l4-3.500v12l-4-3.500h-3zM9.500 5.500q2 2.500 0 5M12 3.500q3.500 4.500 0 9M14 1.500q4.500 6.500 0 13" />
      </svg>
      <time className="w-[72px] text-center leading-[18px]">
        1:13 PM
        <br />
        1/9/2025
      </time>
      <button aria-label="Notifications" className="ml-2">
        <svg width="16" height="17" viewBox="0 0 16 17" fill="none" stroke="#fff">
          <path d="M0.500 1.500h15v11h-5L8 15l-2.500-2.500h-5z" />
        </svg>
      </button>
      <span className="mr-1 ml-5 h-full w-px bg-[#5c6470]" />
    </div>
  </footer>
);

export default function App() {
  return (
    <div className="relative flex h-screen flex-col overflow-hidden font-['Open_Sans','DejaVu_Sans',sans-serif] text-xs text-black">
      <Browser />
      <RarWindow />
      <Explorer />
      <Watermark />
      <Taskbar />
    </div>
  );
}
